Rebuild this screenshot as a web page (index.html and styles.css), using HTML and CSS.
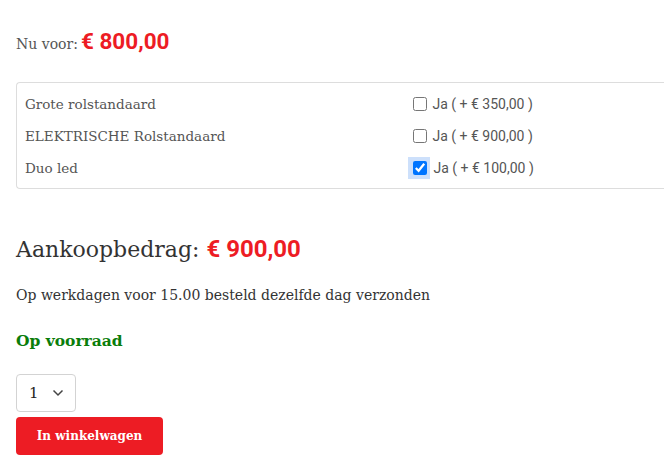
FILE: index.html
```html
<!DOCTYPE html>
<html lang="nl">
<head>
  <meta charset="UTF-8">
  <title>Product</title>
  <link rel="stylesheet" href="styles.css">
</head>
<body>
  <div class="price-now">
    <span class="label">Nu voor:</span> <span class="price">€ 800,00</span>
  </div>

  <div class="options">
    <div class="option">
      <span class="name">Grote rolstandaard</span>
      <label class="choice"><input type="checkbox"> Ja ( + € 350,00 )</label>
    </div>
    <div class="option">
      <span class="name">ELEKTRISCHE Rolstandaard</span>
      <label class="choice"><input type="checkbox"> Ja ( + € 900,00 )</label>
    </div>
    <div class="option">
      <span class="name">Duo led</span>
      <label class="choice"><span class="focus"><input type="checkbox" checked></span> Ja ( + € 100,00 )</label>
    </div>
  </div>

  <h2 class="total">Aankoopbedrag: <span class="price">€ 900,00</span></h2>

  <p class="shipping">Op werkdagen voor 15.00 besteld dezelfde dag verzonden</p>

  <p class="stock">Op voorraad</p>

  <div class="qty">
    <span>1</span>
    <svg width="12" height="8" viewBox="0 0 12 8"><path d="M1.5 1.5 L6 6 L10.5 1.5" fill="none" stroke="#444" stroke-width="1.5"/></svg>
  </div>
  <button class="cart">In winkelwagen</button>
</body>
</html>
```

FILE: styles.css
```css
html {
  overflow: hidden;
}
body {
  margin: 0;
  padding: 0 0 0 16px;
  font-family: "DejaVu Serif", serif;
  color: #555;
  background: #fff;
}
.price-now {
  margin-top: 28px;
  height: 30px;
  display: flex;
  align-items: baseline;
  gap: 3px;
}
.price-now .label {
  font-size: 14px;
  color: #555;
}
.price {
  font-family: Roboto, "Liberation Sans", sans-serif;
  font-weight: bold;
  color: #ed1c24;
}
.price-now .price {
  font-size: 22.5px;
}
.options {
  margin-top: 24px;
  border: 1px solid #ddd;
  border-right: none;
  border-radius: 4px 0 0 4px;
  padding: 5px 0 4px;
}
.option {
  display: flex;
  align-items: center;
  height: 32px;
}
.name {
  width: 383px;
  padding-left: 8px;
  font-size: 13.5px;
  color: #555;
}
.choice {
  display: flex;
  align-items: center;
  font-family: Roboto, "Liberation Sans", sans-serif;
  font-size: 14px;
  color: #555;
  white-space: pre;
}
.choice input {
  margin: 0 2px 0 5px;
  width: 14px;
  height: 14px;
}
.focus {
  display: inline-flex;
  background: #cde0fb;
  padding: 4px 1px 4px 0;
  margin: -4px 0;
}
.focus input {
  margin-right: 2px;
}
.total {
  margin: 46px 0 0;
  font-size: 22px;
  font-weight: normal;
  color: #333;
}
.total .price {
  font-size: 24px;
}
.shipping {
  margin: 24px 0 0;
  font-size: 14px;
  color: #333;
}
.stock {
  margin: 28px 0 0;
  font-size: 15.5px;
  font-weight: bold;
  color: #0a7d0a;
}
.qty {
  margin-top: 24px;
  box-sizing: border-box;
  width: 60px;
  height: 38px;
  border: 1px solid #d3d3d3;
  border-radius: 4px;
  display: flex;
  align-items: center;
  gap: 13px;
  padding-left: 12px;
  font-size: 15px;
  color: #222;
}
.cart {
  display: block;
  margin-top: 5px;
  width: 147px;
  height: 38px;
  border: none;
  border-radius: 4px;
  background: #ed1c24;
  color: #fff;
  font-family: "DejaVu Serif", serif;
  font-weight: bold;
  font-size: 12px;
  cursor: pointer;
}
```
